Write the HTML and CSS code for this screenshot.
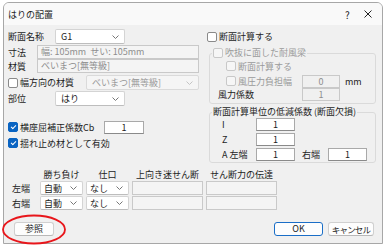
FILE: index.html
```html
<!DOCTYPE html>
<html lang="ja">
<head>
<meta charset="utf-8">
<title>はりの配置</title>
<link rel="stylesheet" href="styles.css">
</head>
<body>
<div class="win">
  <div class="titlebar">
    <span class="title">はりの配置</span>
    <span class="tb-help">?</span>
    <span class="tb-close"><svg width="8" height="8" viewBox="0 0 8 8"><path d="M0.5 0.5L7.5 7.5M7.5 0.5L0.5 7.5" stroke="#222" stroke-width="1" fill="none"/></svg></span>
  </div>
  <div class="content">
    <div class="top">
      <div class="left">
        <div class="row r1"><span class="lbl w47">断面名称</span><div class="combo w70"><span class="cv">G1</span><svg class="chev" width="7" height="4" viewBox="0 0 7 4"><path d="M0.5 0.5L3.5 3.5L6.5 0.5" stroke="#777" fill="none"/></svg></div></div>
        <div class="row r2"><span class="lbl w29">寸法</span><div class="field dis w162">幅: 105mm&nbsp; せい: 105mm</div></div>
        <div class="row r3"><span class="lbl w29">材質</span><div class="field dis w162">べいまつ[無等級]</div></div>
        <div class="row r4"><label class="chk w78"><span class="box"></span>幅方向の材質</label><div class="combo dis w113"><span class="cv">べいまつ[無等級]</span><svg class="chev" width="7" height="4" viewBox="0 0 7 4"><path d="M0.5 0.5L3.5 3.5L6.5 0.5" stroke="#c4c4c4" fill="none"/></svg></div></div>
        <div class="row r5"><span class="lbl w47">部位</span><div class="combo w70"><span class="cv">はり</span><svg class="chev" width="7" height="4" viewBox="0 0 7 4"><path d="M0.5 0.5L3.5 3.5L6.5 0.5" stroke="#777" fill="none"/></svg></div></div>
        <div class="row r6"><label class="chk w96"><span class="box on"></span>横座屈補正係数Cb</label><div class="tb w40">1</div></div>
        <div class="row r7"><label class="chk"><span class="box on"></span>揺れ止め材として有効</label></div>
      </div>
      <div class="right">
        <div class="row rr1"><label class="chk"><span class="box"></span>断面計算する</label></div>
        <fieldset class="grp g1">
          <legend><label class="chk dis"><span class="box"></span>吹抜に面した耐風梁</label></legend>
          <div class="row ga"><label class="chk dis"><span class="box"></span>断面計算する</label></div>
          <div class="row gb"><label class="chk dis w76"><span class="box"></span>風圧力負担幅</label><div class="tb dis w38">0</div><span class="unit">mm</span></div>
          <div class="row gc"><span class="lbl w84">風力係数</span><div class="tb dis w38">1</div></div>
        </fieldset>
        <fieldset class="grp g2">
          <legend>断面計算単位の低減係数 (断面欠損)</legend>
          <div class="row ha"><span class="lbl w34">I</span><div class="tb w39">1</div></div>
          <div class="row hb"><span class="lbl w34">Z</span><div class="tb w39">1</div></div>
          <div class="row hc"><span class="lbl w34">A 左端</span><div class="tb w39">1</div><span class="lbl pl8">右端</span><div class="tb w39">1</div></div>
        </fieldset>
      </div>
    </div>
    <div class="tbl">
      <span></span><span class="th">勝ち負け</span><span class="th">仕口</span><span class="th">上向き迷せん断</span><span class="th">せん断力の伝達</span>
      <span class="rl">左端</span>
      <div class="combo"><span class="cv">自動</span><svg class="chev" width="7" height="4" viewBox="0 0 7 4"><path d="M0.5 0.5L3.5 3.5L6.5 0.5" stroke="#777" fill="none"/></svg></div>
      <div class="combo"><span class="cv">なし</span><svg class="chev" width="7" height="4" viewBox="0 0 7 4"><path d="M0.5 0.5L3.5 3.5L6.5 0.5" stroke="#777" fill="none"/></svg></div>
      <div class="field dis"></div>
      <div class="field dis"></div>
      <span class="rl">右端</span>
      <div class="combo"><span class="cv">自動</span><svg class="chev" width="7" height="4" viewBox="0 0 7 4"><path d="M0.5 0.5L3.5 3.5L6.5 0.5" stroke="#777" fill="none"/></svg></div>
      <div class="combo"><span class="cv">なし</span><svg class="chev" width="7" height="4" viewBox="0 0 7 4"><path d="M0.5 0.5L3.5 3.5L6.5 0.5" stroke="#777" fill="none"/></svg></div>
      <div class="field dis"></div>
      <div class="field dis"></div>
    </div>
    <div class="btns">
      <button class="btn ref">参照</button>
      <span class="spacer"></span>
      <button class="btn ok">OK</button>
      <button class="btn cancel">キャンセル</button>
    </div>
  </div>
</div>
<svg class="mark" width="66" height="32" viewBox="0 0 66 32"><ellipse cx="33" cy="15.5" rx="31" ry="14" fill="none" stroke="#e8161b" stroke-width="1.8"/></svg>
</body>
</html>
```
FILE: styles.css
```css
* { box-sizing: border-box; }
html, body { margin: 0; padding: 0; background: #ffffff; }
body {
  width: 386px;
  height: 247px;
  overflow: hidden;
  font-family: "Noto Sans CJK JP", "Noto Sans", sans-serif;
  font-size: 9px;
  color: #1c1c1c;
  position: relative;
}
.win {
  margin: 2px 0 0 3px;
  width: 380px;
  height: 242px;
  border: 1px solid #a7a7a7;
  border-radius: 6px 6px 0 0;
  background: #f0f0f0;
  overflow: hidden;
}
.titlebar {
  height: 22px;
  background: #f9f9f9;
  display: flex;
  align-items: center;
  padding-left: 4px;
}
.title { flex: 1; font-size: 9px; }
.tb-help { width: 19px; font-size: 10px; text-align: left; }
.tb-close { width: 18px; display: flex; align-items: center; }
.content { padding: 4px 0 0 4px; }
.top { display: flex; height: 139px; }
.left { width: 191px; display: flex; flex-direction: column; }
.right { margin-left: 7px; width: 172px; display: flex; flex-direction: column; }
.row { display: flex; align-items: center; white-space: nowrap; }
.r1 { height: 15px; }
.r2 { height: 14px; margin-top: 1px; }
.r3 { height: 14px; }
.r4 { height: 15px; margin-top: 2px; }
.r5 { height: 15px; margin-top: 1px; }
.r6 { height: 14px; margin-top: 14px; }
.r7 { height: 14px; margin-top: 2px; }
.lbl { flex: none; }
.w29 { width: 29px; }
.w34 { width: 34px; }
.w47 { width: 47px; }
.w84 { width: 84px; }
.w76 { width: 76px; }
.w78 { width: 78px; }
.w96 { width: 96px; }
.w38 { width: 38px; }
.w39 { width: 39px; }
.w40 { width: 40px; }
.w70 { width: 70px; }
.w113 { width: 113px; }
.w162 { width: 162px; }
.pl8 { padding-left: 7px; width: 33px; }
.combo {
  flex: none;
  height: 15px;
  background: #ffffff;
  border: 1px solid #d4d4d4;
  border-bottom-color: #bdbdbd;
  border-radius: 2px;
  display: flex;
  align-items: center;
  padding: 0 5px 0 5px;
}
.combo .cv { flex: 1; }
.combo.dis { background: #f5f5f5; color: #9a9a9a; border-color: #dadada; }
.chev { flex: none; }
.field {
  flex: none;
  height: 14px;
  border: 1px solid #c9c9c9;
  background: #f4f4f4;
  color: #8e8e8e;
  padding-left: 3px;
  line-height: 12px;
}
.tb {
  flex: none;
  height: 13px;
  background: #ffffff;
  border: 1px solid #a9a9a9;
  border-bottom-color: #8a8a8a;
  text-align: center;
  line-height: 11px;
}
.tb.dis { background: #f0f0f0; color: #8e8e8e; border-color: #c9c9c9; }
.chk { display: flex; align-items: center; flex: none; }
.chk .box {
  flex: none;
  width: 10px;
  height: 10px;
  border: 1px solid #8a8a8a;
  border-radius: 2px;
  background: #ffffff;
  margin-right: 2px;
  position: relative;
}
.chk.dis { color: #9a9a9a; }
.chk.dis .box { border-color: #c8c8c8; background: #f6f6f6; }
.chk .box.on { background: #0a64c2; border-color: #0a64c2; }
.chk .box.on::after {
  content: "";
  position: absolute;
  left: 2px;
  top: 2px;
  width: 4px;
  height: 2px;
  border-left: 1.2px solid #fff;
  border-bottom: 1.2px solid #fff;
  transform: rotate(-45deg);
  transform-origin: center;
}
.rr1 { height: 15px; padding-left: 1px; }
.grp {
  margin: 3px 0 0 3px;
  width: 167px;
  border: 1px solid #dadada;
  border-radius: 3px;
  padding: 0;
  min-width: 0;
}
.grp legend { padding: 0 1px; margin-left: 2px; line-height: 12px; }
.g1 legend { color: #9a9a9a; }
.g1 { height: 57px; }
.ga { height: 12px; margin-top: 1px; padding-left: 16px; }
.gb { height: 14px; margin-top: 2px; padding-left: 16px; }
.unit { margin-left: 5px; }
.gc { height: 13px; padding-left: 8px; margin-top: 0; }
.g2 { margin-top: 2px; height: 57px; }
.ha, .hb, .hc { height: 12px; padding-left: 12px; margin-top: 3px; }
.ha { margin-top: 0; }
.tbl {
  display: grid;
  grid-template-columns: 29px 43px 43px 71px 71px;
  grid-template-rows: 12px 14px 14px;
  column-gap: 3px;
  row-gap: 1px;
  margin-top: 0;
  width: 270px;
}
.tbl .combo { height: 14px; padding-left: 3px; }
.tbl .field { height: 14px; }
.th { text-align: center; align-self: center; }
.rl { align-self: center; padding-left: 4px; }
.btns { display: flex; margin-top: 12px; padding-left: 6px; padding-right: 8px; }
.spacer { flex: 1; }
.btn {
  font-family: inherit;
  font-size: 9px;
  color: #1c1c1c;
  height: 14px;
  padding: 0;
  background: #fdfdfd;
  border: 1px solid #d0d0d0;
  border-bottom-color: #b8b8b8;
  border-radius: 3px;
  line-height: 12px;
  white-space: nowrap;
}
.ref { width: 40px; }
.ok { width: 49px; border: 1px solid #1a6ec7; margin-right: 5px; }
.cancel { width: 46px; letter-spacing: -0.8px; font-size: 8.5px; }
.mark { position: absolute; left: 1px; top: 214px; }
```
